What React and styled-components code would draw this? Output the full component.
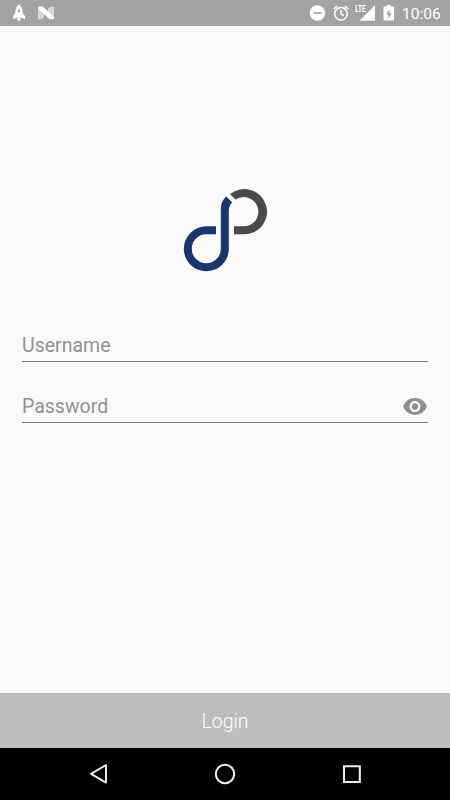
import React, { useState } from 'react';
import styled, { createGlobalStyle } from 'styled-components';

const App = () => {
  const [username, setUsername] = useState("");
  const [password, setPassword] = useState("");
  const [visible, setVisible] = useState(false);

  return (
    <Screen>
      <GlobalStyle />
      <StatusBar>
        <StatusGroup>
          <RocketIcon />
          <NougatIcon />
        </StatusGroup>
        <StatusIcons />
        <Clock>10:06</Clock>
      </StatusBar>

      <Content>
        <Logo />
        <Field>
          <Input
            type="text"
            placeholder="Username"
            value={username}
            onChange={(e) => setUsername(e.target.value)}
          />
        </Field>
        <Field>
          <Input
            type={visible ? "text" : "password"}
            placeholder="Password"
            value={password}
            onChange={(e) => setPassword(e.target.value)}
          />
          <EyeButton type="button" onClick={() => setVisible(!visible)}>
            <svg width="26" height="27" viewBox="0 0 24 24" preserveAspectRatio="none" fill="#8f8f8f">
              <path d="M12 4.5C7 4.5 2.73 7.61 1 12c1.73 4.39 6 7.5 11 7.5s9.27-3.11 11-7.5c-1.73-4.39-6-7.5-11-7.5zM12 17c-2.76 0-5-2.24-5-5s2.24-5 5-5 5 2.24 5 5-2.24 5-5 5zm0-8c-1.66 0-3 1.34-3 3s1.34 3 3 3 3-1.34 3-3-1.34-3-3-3z" />
            </svg>
          </EyeButton>
        </Field>
      </Content>

      <LoginButton type="button">Login</LoginButton>

      <NavBar>
        <svg width="24" height="24" viewBox="0 0 24 24" fill="none" stroke="#ececec" strokeWidth="2">
          <path d="M20 3v17.6L5 11.8z" strokeLinejoin="round" />
        </svg>
        <svg width="24" height="24" viewBox="0 0 24 24" fill="none" stroke="#ececec" strokeWidth="2.1">
          <circle cx="12" cy="12" r="9.2" />
        </svg>
        <svg width="24" height="24" viewBox="0 0 24 24" fill="none" stroke="#ececec" strokeWidth="2.1">
          <path d="M4 4.2h15.8v15.8H4z" />
        </svg>
      </NavBar>
    </Screen>
  );
};

const RocketIcon = () => (
  <svg width="14" height="18" viewBox="0 0 14 18" fill="#fff">
    <path
      fillRule="evenodd"
      d="M7 .2C9.2 2 10.6 4.4 10.6 7v2l2.4 3v3.2l-3.2-1.5H4.2L1 15.2V12l2.400-3V7C3.400 4.400 4.800 2 7 .2zM7 5.600a1.300 1.300 0 1 0 0 2.600 1.300 1.300 0 0 0 0-2.600z"
    />
    <path d="M4.500 14.300h5L7 17.600z" />
  </svg>
);

const NougatIcon = () => (
  <svg width="16" height="14" viewBox="0 0 16 14">
    <path d="M0 1v12.500l6-1.500V4zM16 .5 10 2v8l6 2.500z" fill="#d6d6d6" />
    <path d="M.5 1C2 .1 4.200 0 5.500 1.200L16 10.800v2c-1.800.9-4 .7-5.200-.4L.5 3z" fill="#fff" />
  </svg>
);

const StatusIcons = () => (
  <svg width="86" height="20" viewBox="0 0 86 20" fill="#fff">
    {/* do not disturb */}
    <circle cx="8.4" cy="10" r="7.7" />
    <path d="M4.4 9.100h8v1.700h-8z" fill="#a3a3a3" />
    {/* alarm */}
    <g fill="none" stroke="#fff" strokeWidth="1.5">
      <circle cx="32" cy="10.800" r="6.300" />
      <path d="M32 7v4l2.900 1.700M24.800 6l3.400-2.900M39.200 6l-3.400-2.900" />
    </g>
    {/* LTE signal */}
    <path d="M66 2.300v15.500H50.500L58.200 10.100z" />
    <text
      x="46.200"
      y="9.200"
      fontFamily="Roboto, sans-serif"
      fontSize="9"
      fontWeight="700"
      textLength="10.500"
      lengthAdjust="spacingAndGlyphs"
    >
      LTE
    </text>
    {/* battery */}
    <path
      fillRule="evenodd"
      d="M77.800 1.800h4v1.700h2.300a1 1 0 0 1 1 1v12a1 1 0 0 1-1 1h-8.600a1 1 0 0 1-1-1v-12a1 1 0 0 1 1-1h2.300zM80.700 6.500l-3.700 5h2.300v4l3.600-5.200h-2.200z"
    />
  </svg>
);

const Logo = () => (
  <LogoSvg width="84" height="84" viewBox="0 0 84 84">
    <path
      d="M33 38.300H23.300a22.500 22.500 0 1 0 22.500 22.500V22.500C45.800 19.500 47 16.800 49.200 14.500L43.300 8.600C39.500 12 37.800 16 37.800 22V60.800a14.500 14.500 0 1 1-14.500-14.500H33z"
      fill="#19366f"
    />
    <path
      d="M47 6.300A22.600 22.600 0 1 1 60.700 46.300H51v-8h9.700A14.600 14.600 0 1 0 52.600 11.600z"
      fill="#4a4a4b"
    />
  </LogoSvg>
);

const GlobalStyle = createGlobalStyle`
  * {
    box-sizing: border-box;
  }

  body {
    margin: 0;
    font-family: Roboto, sans-serif;
    background-color: #fafafa;
  }
`;

const Screen = styled.div`
  display: flex;
  flex-direction: column;
  width: 100%;
  height: 100vh;
  overflow: hidden;
  background-color: #fafafa;

  svg {
    display: block;
    flex-shrink: 0;
  }
`;

const StatusBar = styled.header`
  display: flex;
  align-items: center;
  height: 26px;
  flex-shrink: 0;
  padding: 0 9px 0 12px;
  background-color: #a3a3a3;
`;

const StatusGroup = styled.div`
  display: flex;
  align-items: center;
  gap: 12px;
  margin-right: auto;
`;

const Clock = styled.span`
  width: 39px;
  margin-left: 7px;
  padding-top: 1px;
  color: #ffffff;
  font-size: 15.5px;
  line-height: 26px;
  white-space: nowrap;
`;

const Content = styled.main`
  display: flex;
  flex: 1;
  flex-direction: column;
  align-items: stretch;
  padding: 162px 22px 0;
`;

const LogoSvg = styled.svg`
  align-self: center;
  margin-bottom: 55px;
`;

const Field = styled.div`
  display: flex;
  align-items: center;
  height: 35px;
  margin-bottom: 26px;
  border-bottom: 1px solid #777777;
`;

const Input = styled.input`
  flex: 1;
  min-width: 0;
  height: 34px;
  padding: 2px 0 0;
  border: none;
  outline: none;
  background: none;
  color: #333333;
  font-family: inherit;
  font-size: 19.5px;

  &::placeholder {
    color: #929292;
    opacity: 1;
  }
`;

const EyeButton = styled.button`
  margin: 3px 0 0;
  padding: 0;
  border: none;
  background: none;
`;

const LoginButton = styled.button`
  height: 55px;
  flex-shrink: 0;
  padding: 2px 0 0;
  border: none;
  background-color: #bdbdbd;
  color: #ffffff;
  font-family: inherit;
  font-size: 19.5px;
  font-weight: 300;
`;

const NavBar = styled.nav`
  display: flex;
  align-items: center;
  justify-content: space-between;
  height: 52px;
  flex-shrink: 0;
  padding: 0 86px;
  background-color: #000000;
`;

export default App;
